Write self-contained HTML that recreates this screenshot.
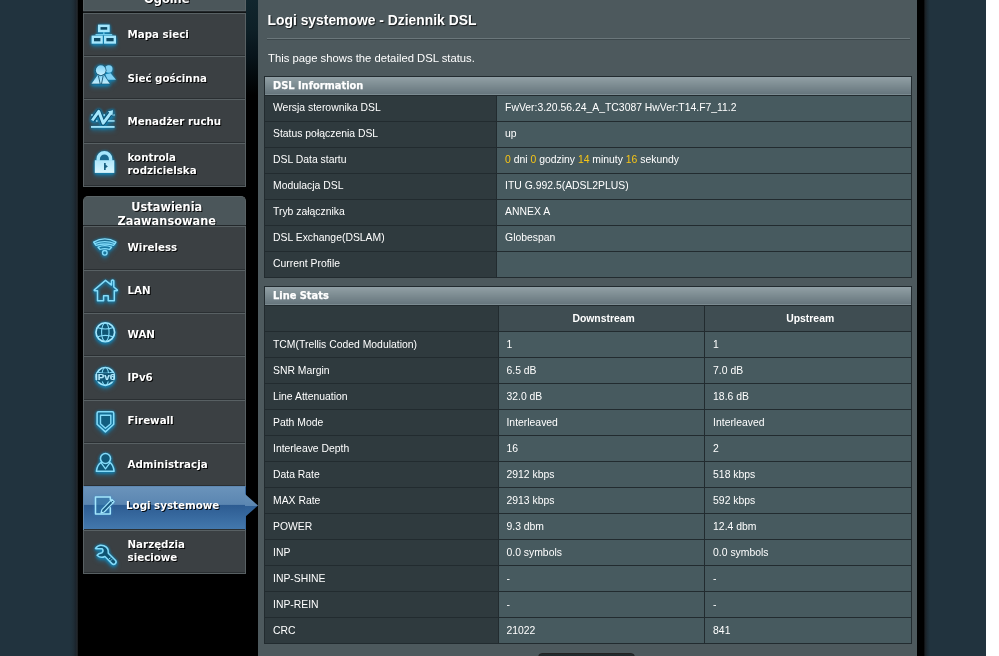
<!DOCTYPE html>
<html lang="pl"><head><meta charset="utf-8"><title>Logi systemowe - Dziennik DSL</title>
<style>
html,body{margin:0;padding:0;}
body{width:999px;height:656px;overflow:hidden;background:#fff;position:relative;font-family:"Liberation Sans",Arial,sans-serif;color:#fff;}
#bg{position:absolute;left:0;top:0;width:986px;height:656px;background:#21333e;overflow:hidden;}
#blk{position:absolute;left:77px;top:0;width:847px;height:656px;background:#000;}
#el{position:absolute;left:70px;top:0;width:7.5px;height:656px;background:linear-gradient(to right,#21333e 0%,#1f2e38 40%,#1b242c 72%,#25292d 90%,#0a0c0e 100%);}
#er{position:absolute;left:923.7px;top:0;width:6px;height:656px;background:linear-gradient(to right,#0a0c0e 0%,#1b2227 25%,#1c2a33 55%,#21333e 100%);}
#glow{position:absolute;left:246px;top:0;width:12px;height:95px;background:linear-gradient(to bottom,#11262e 0%,#0e2027 30%,#07131a 60%,#000 100%);}
.mh{position:absolute;left:83px;width:163px;background:#4b565a;border:1px solid #5a6366;border-bottom:none;border-radius:5px 5px 0 0;text-align:center;font-family:"DejaVu Sans",Verdana,sans-serif;font-weight:bold;font-size:11.4px;line-height:13.6px;padding-left:4.5px;text-shadow:1px 1px .6px rgba(0,0,0,.9);box-sizing:border-box;overflow:hidden;}
.mi{position:absolute;left:83px;width:163px;height:44.33px;box-sizing:border-box;border:1px solid #586063;background:#3b4043;box-shadow:inset 0 -1px 0 #2a2f32;font-family:"DejaVu Sans",Verdana,sans-serif;font-weight:bold;font-size:10.3px;text-shadow:1px 1px .6px rgba(0,0,0,.9);}
.mi .tx{position:absolute;left:43.5px;top:-1px;height:42.3px;display:flex;align-items:center;line-height:13px;white-space:nowrap;}
.mi svg{position:absolute;left:0;top:0;overflow:visible;}
.mi.act{background:linear-gradient(to bottom,#6a93bb 0%,#5b86b1 40.5%,#2d5c92 42.5%,#4479ae 100%);border-color:#5f88b2 #39689b #39689b #5f88b2;}
.mi.act .tx{left:42px;top:-3.2px;}
#arrow{position:absolute;left:245px;top:494px;width:13px;height:23px;}
#panel{position:absolute;left:258px;top:-10px;width:659px;height:680px;background:#4d595d;border-radius:3px;}
#title{position:absolute;left:267.5px;top:12px;font-size:13.88px;font-weight:bold;line-height:16px;white-space:nowrap;text-shadow:1px 1px 1px rgba(0,0,0,.7);}
#hr{position:absolute;left:267px;top:38.3px;width:643px;height:1px;background:#6b777b;box-shadow:0 1px 0 #3d484c;}
#desc{position:absolute;left:268px;top:50.5px;font-size:11.27px;line-height:14px;white-space:nowrap;}
table{position:absolute;left:264px;width:648px;border-collapse:collapse;font-size:10.4px;table-layout:fixed;}
td,th{border:1px solid #222b2f;padding:0 0 0 8px;height:25px;text-align:left;font-weight:normal;white-space:nowrap;overflow:hidden;}
th{background:#2f3a3e;}
td{background:#475a5f;padding-left:7.7px;}
thead td{height:18px;background:linear-gradient(to bottom,#93a1a6 0%,#66757c 100%);font-family:"DejaVu Sans",Verdana,sans-serif;font-weight:bold;font-size:9.85px;padding-left:8px;-webkit-text-stroke:.25px #fff;}
.t1 tbody td,.t1 tbody th{padding-bottom:1.6px;height:23.42px;}
th.c{text-align:center;font-weight:bold;padding-left:4px;background:#3f4d52;}
.y{color:#f7c515;}
#btn{position:absolute;left:538px;top:653px;width:97px;height:20px;border:1px solid #222;border-radius:4px;background:linear-gradient(to bottom,#222b2e,#121a1d);box-sizing:border-box;}
</style></head><body>
<svg width="0" height="0" style="position:absolute"><defs>
<filter id="gl" x="-40%" y="-40%" width="180%" height="200%" color-interpolation-filters="sRGB"><feGaussianBlur in="SourceAlpha" stdDeviation="1.5" result="b"/><feFlood flood-color="#0f84b6" flood-opacity=".9"/><feComposite in2="b" operator="in" result="g"/><feOffset in="g" dy="1.2" result="g2"/><feGaussianBlur in="SourceAlpha" stdDeviation="2.2" result="b3"/><feFlood flood-color="#1685b8" flood-opacity=".65"/><feComposite in2="b3" operator="in" result="g3a"/><feOffset in="g3a" dy="3" result="g3"/><feMerge><feMergeNode in="g3"/><feMergeNode in="g"/><feMergeNode in="g2"/><feMergeNode in="SourceGraphic"/></feMerge></filter>
<filter id="gl2" x="-40%" y="-40%" width="180%" height="180%" color-interpolation-filters="sRGB"><feGaussianBlur in="SourceAlpha" stdDeviation="1.4" result="b"/><feFlood flood-color="#2f8fd0" flood-opacity=".6"/><feComposite in2="b" operator="in" result="g"/><feMerge><feMergeNode in="g"/><feMergeNode in="SourceGraphic"/></feMerge></filter>
<linearGradient id="gA" x1="0" y1="0" x2="0" y2="1"><stop offset="0" stop-color="#7fd3f8"/><stop offset="1" stop-color="#c4eefd"/></linearGradient>
<linearGradient id="gB" x1="0" y1="0" x2="0" y2="1"><stop offset="0" stop-color="#aee6fa"/><stop offset="1" stop-color="#d9f6fe"/></linearGradient>
</defs></svg>
<div id="bg" style="will-change:transform">
<div id="blk"></div><div id="el"></div><div id="er"></div>
<div id="glow"></div>

<div class="mh" style="top:-20px;height:31.2px;padding-top:12px;border-radius:0;box-shadow:inset 0 -1px 0 #566064,0 1.5px 0 #23282b;">Ogólne</div>
<div class="mi" style="top:12.70px"><svg width="45" height="42.3" viewBox="84 13.70 45 42.3"><g filter="url(#gl)">
<rect x="99.25" y="25.55" width="9.2" height="5.1" fill="#0f4a64" stroke="#a4e6fc" stroke-width="2.5"/>
<path d="M103.85 32 V34.3 M95.5 34.3 H112.2" fill="none" stroke="#84dbf9" stroke-width="1.3" opacity=".85"/>
<rect x="92.8" y="36.5" width="8.8" height="5.7" fill="#0f4a64" stroke="#a4e6fc" stroke-width="2.4"/>
<rect x="105.2" y="36.5" width="9.6" height="5.7" fill="#0f4a64" stroke="#a4e6fc" stroke-width="2.4"/>
</g></svg><div class="tx" style="margin-top:1px"><span>Mapa sieci</span></div></div>
<div class="mi" style="top:56.03px"><svg width="45" height="42.3" viewBox="84 57.03 45 42.3"><g filter="url(#gl)">
<circle cx="108.8" cy="69" r="3.7" fill="#7fd0f3"/>
<path d="M105.3 74.2 L110.6 73.4 L116 79.8 L107.6 79.8 Z" fill="#7fd0f3"/>
<circle cx="100.8" cy="70.3" r="5.6" fill="#134e6b"/>
<circle cx="100.8" cy="70.3" r="4.9" fill="url(#gA)"/>
<path d="M91 84 L97.6 74.6 Q100.8 77 104 74.6 L110.3 84 Z" fill="url(#gA)" stroke="#134e6b" stroke-width=".6"/>
<path d="M98.4 75.6 L100.2 84 M103.2 75.6 L101.5 84" fill="none" stroke="#14506e" stroke-width=".9"/>
</g></svg><div class="tx" style="margin-top:1px"><span>Sieć gościnna</span></div></div>
<div class="mi" style="top:99.37px"><svg width="45" height="42.3" viewBox="84 100.37 45 42.3"><g filter="url(#gl)" transform="translate(0,.3)">
<path d="M91.2 115 h1.6 M103.4 115 h1.6 M113 115 h1.6 M96 121 h1.6" fill="none" stroke="#a4e6fc" stroke-width="1.5"/>
<path d="M107.5 121 H114.6" fill="none" stroke="#a4e6fc" stroke-width="1.5"/>
<path d="M91 127 H114.6" fill="none" stroke="#a4e6fc" stroke-width="1.8"/>
<path d="M92.2 120.6 L98.7 111.4 L103.2 123.2 L111 112.6" fill="none" stroke="#0e4d6c" stroke-width="4.9" stroke-linejoin="round"/>
<path d="M107.2 111.2 L113.6 109.6 L112.8 116.6 Z" fill="#a4e6fc" stroke="#0e4d6c" stroke-width=".8"/>
<path d="M92.2 120.6 L98.7 111.4 L103.2 123.2 L111 112.6" fill="none" stroke="#a4e6fc" stroke-width="2.9" stroke-linejoin="round"/>
</g></svg><div class="tx" style="margin-top:1px"><span>Menadżer ruchu</span></div></div>
<div class="mi" style="top:142.70px"><svg width="45" height="42.3" viewBox="84 143.70 45 42.3"><g filter="url(#gl)">
<path d="M98.2 160.5 V158.6 A6.2 6.2 0 0 1 110.6 158.6 V160.5" fill="#1b6b90" stroke="#a4e6fc" stroke-width="3.4"/>
<rect x="94.8" y="159.9" width="19.5" height="12.7" fill="url(#gB)"/>
<path d="M104 162.8 h1.7 v1.6 l2.2 1.7 l-2.2 1.7 v1.8 h-1.7 Z" fill="#1c6282"/>
</g></svg><div class="tx"><span>kontrola<br>rodzicielska</span></div></div>
<div class="mh" style="top:195.7px;height:29.6px;padding-top:4.6px;box-shadow:0 1.5px 0 #23282b;">Ustawienia<br>Zaawansowane</div>
<div class="mi" style="top:226.40px"><svg width="45" height="42.3" viewBox="84 227.40 45 42.3"><g filter="url(#gl)">
<path d="M93.6 242.5 Q104.8 236.1 116 242.5 L113.6 245.7 Q104.8 243.1 96 245.7 Z" fill="none" stroke="#84dbf9" stroke-width="1.3" stroke-linejoin="round" stroke-linecap="round" />
<path d="M94.8 244.1 Q104.8 239.9 114.8 244.1" fill="none" stroke="#84dbf9" stroke-width="1.3" stroke-linejoin="round" stroke-linecap="round" />
<path d="M98 247.6 Q104.8 244.6 111.6 247.6 L109.5 249.9 Q104.8 248.1 100.1 249.9 Z" fill="none" stroke="#84dbf9" stroke-width="1.3" stroke-linejoin="round" stroke-linecap="round" />
<circle cx="104.8" cy="253.2" r="2.3" fill="none" stroke="#84dbf9" stroke-width="1.35" stroke-linejoin="round" stroke-linecap="round" />
</g></svg><div class="tx"><span>Wireless</span></div></div>
<div class="mi" style="top:269.73px"><svg width="45" height="42.3" viewBox="84 270.73 45 42.3"><g filter="url(#gl)">
<path d="M105.5 280.1 L94.3 289.6 Q93.8 290.4 94.8 290.4 L97.5 290.4 V300.5 H103.6 V295.6 H108.2 V300.5 H114.3 V290.4 L116.8 290.4 Q117.8 290.4 117.2 289.6 L113.8 286.7 V280.4 Q112.6 279 111.5 280.4 V284.8 Z" fill="none" stroke="#84dbf9" stroke-width="1.5" stroke-linejoin="round" stroke-linecap="round" />
</g></svg><div class="tx"><span>LAN</span></div></div>
<div class="mi" style="top:313.07px"><svg width="45" height="42.3" viewBox="84 314.07 45 42.3"><g filter="url(#gl)"><circle cx="105.3" cy="332.3" r="9.3" fill="#0f4a64" fill-opacity=".8" stroke="#a4e6fc" stroke-width="1.7"/>
<ellipse cx="105.3" cy="332.3" rx="3.72" ry="9.3" fill="none" stroke="#84dbf9" stroke-width="1.1" stroke-linejoin="round" stroke-linecap="round" />
<path d="M97.30 327.65 Q105.3 330.63 113.30 327.65 M97.30 336.95 Q105.3 333.97 113.30 336.95" fill="none" stroke="#84dbf9" stroke-width="1.1" stroke-linejoin="round" stroke-linecap="round" /></g></svg><div class="tx"><span>WAN</span></div></div>
<div class="mi" style="top:356.40px"><svg width="45" height="42.3" viewBox="84 357.40 45 42.3"><g filter="url(#gl)"><circle cx="105.3" cy="376.8" r="8.9" fill="#0f4a64" fill-opacity=".8" stroke="#a4e6fc" stroke-width="1.7"/>
<ellipse cx="105.3" cy="376.8" rx="3.56" ry="8.9" fill="none" stroke="#84dbf9" stroke-width="1.1" stroke-linejoin="round" stroke-linecap="round" />
<path d="M97.65 372.35 Q105.3 375.20 112.95 372.35 M97.65 381.25 Q105.3 378.40 112.95 381.25" fill="none" stroke="#84dbf9" stroke-width="1.1" stroke-linejoin="round" stroke-linecap="round" />
<rect x="96.9" y="373.5" width="16.8" height="8.3" fill="#125877"/>
<text x="105.2" y="380.9" text-anchor="middle" font-family="Liberation Sans, Arial, sans-serif" font-size="8.3" textLength="20.4" lengthAdjust="spacingAndGlyphs" fill="#b5eafc" stroke="#b5eafc" stroke-width=".12" style="text-shadow:none">IPv6</text></g></svg><div class="tx"><span>IPv6</span></div></div>
<div class="mi" style="top:399.73px"><svg width="45" height="42.3" viewBox="84 400.73 45 42.3"><g filter="url(#gl)">
<path d="M98.6 411.4 H112.2 Q113.7 411.4 113.7 412.9 V424 L105.4 431.6 L97.1 424 V412.9 Q97.1 411.4 98.6 411.4 Z" fill="none" stroke="#84dbf9" stroke-width="1.55" stroke-linejoin="round" stroke-linecap="round"  style="fill:#0f5678" fill-opacity=".25"/>
<path d="M100.5 415 H110.8 V423.4 L105.4 428 L100.5 423.4 Z" fill="none" stroke="#84dbf9" stroke-width="1.4" stroke-linejoin="round" stroke-linecap="round"  style="fill:#0f4a64" fill-opacity=".5"/>
</g></svg><div class="tx"><span>Firewall</span></div></div>
<div class="mi" style="top:443.06px"><svg width="45" height="42.3" viewBox="84 444.06 45 42.3"><g filter="url(#gl)">
<path d="M101.3 462.4 Q97.2 464.6 96.4 471.3 H114.1 Q113.3 464.6 109.6 462.4" fill="none" stroke="#84dbf9" stroke-width="1.55" stroke-linejoin="round" stroke-linecap="round"  style="fill:#0f4a64" fill-opacity=".7"/>
<path d="M101.3 463.2 L105.5 469 L109.7 463.2" fill="none" stroke="#84dbf9" stroke-width="1.3" stroke-linejoin="round" stroke-linecap="round" />
<circle cx="105.5" cy="458.6" r="5" fill="none" stroke="#84dbf9" stroke-width="1.55" stroke-linejoin="round" stroke-linecap="round"  style="fill:#0f4a64" fill-opacity=".7"/>
</g></svg><div class="tx"><span>Administracja</span></div></div>
<div class="mi act" style="top:486.40px"><svg width="45" height="42.3" viewBox="84 487.40 45 42.3"><g filter="url(#gl2)" transform="translate(0,.5)">
<path d="M110.3 499.4 V497 H95.5 V514 H110.3 V507.8" fill="none" stroke="#a4e6fc" stroke-width="1.55" stroke-linejoin="round" stroke-linecap="round"  style="fill:#2a6a9a" fill-opacity=".45"/>
<path d="M101 512.8 L101.9 509.6 L111.9 499.3 L114.2 501.6 L104.2 511.9 Z" fill="none" stroke="#a4e6fc" stroke-width="1.2" stroke-linejoin="round" stroke-linecap="round"  style="fill:#16577c" fill-opacity=".9"/>
<path d="M110.6 500.7 L112.9 503" fill="none" stroke="#a4e6fc" stroke-width="1.0" stroke-linejoin="round" stroke-linecap="round" />
</g></svg><div class="tx"><span>Logi systemowe</span></div></div>
<div class="mi" style="top:529.73px"><svg width="45" height="42.3" viewBox="84 530.73 45 42.3"><g filter="url(#gl)">
<path d="M95.51 548.15 A7.0 7.0 0 0 1 108.25 552.92 L115.32 559.99 A2.35 2.35 0 0 1 111.99 563.32 L104.92 556.25 A7.0 7.0 0 0 1 97.08 554.97 L99.0 553.4 L102.0 552.5 Q104 550.5 102.2 548.5 L96.2 548.4 Z" fill="none" stroke="#84dbf9" stroke-width="1.55" stroke-linejoin="round" stroke-linecap="round"  style="fill:#0f4a64" fill-opacity=".8"/>
<path d="M109.3 558.6 l.9 -.9 M110.9 560.2 l.9 -.9" fill="none" stroke="#84dbf9" stroke-width="1.0" stroke-linejoin="round" stroke-linecap="round" />
</g></svg><div class="tx"><span>Narzędzia<br>sieciowe</span></div></div>
<svg id="arrow" viewBox="0 0 13 23"><defs><linearGradient id="ag" x1="0" y1="0" x2="0" y2="1"><stop offset="0" stop-color="#6690b8"/><stop offset=".5" stop-color="#5b86b1"/><stop offset=".52" stop-color="#2f5f95"/><stop offset="1" stop-color="#376aa0"/></linearGradient></defs><path d="M0 0 L13 11.5 L0 23 Z" fill="url(#ag)"/></svg>
<div id="panel"></div>
<div id="title">Logi systemowe - Dziennik DSL</div><div id="hr"></div>
<div id="desc">This page shows the detailed DSL status.</div>
<table class="t1" style="top:75.6px"><colgroup><col style="width:232.4px"><col></colgroup><thead><tr><td colspan="2">DSL Information</td></tr></thead><tbody>
<tr><th>Wersja sterownika DSL</th><td>FwVer:3.20.56.24_A_TC3087 HwVer:T14.F7_11.2</td></tr>
<tr><th>Status połączenia DSL</th><td>up</td></tr>
<tr><th>DSL Data startu</th><td><span class="y">0</span> dni <span class="y">0</span> godziny <span class="y">14</span> minuty <span class="y">16</span> sekundy</td></tr>
<tr><th>Modulacja DSL</th><td>ITU G.992.5(ADSL2PLUS)</td></tr>
<tr><th>Tryb załącznika</th><td>ANNEX A</td></tr>
<tr><th>DSL Exchange(DSLAM)</th><td>Globespan</td></tr>
<tr><th>Current Profile</th><td></td></tr>
</tbody></table>
<table style="top:285.6px"><colgroup><col style="width:233.8px"><col style="width:206.6px"><col></colgroup><thead><tr><td colspan="3" style="height:18px">Line Stats</td></tr></thead><tbody>
<tr><th></th><th class="c">Downstream</th><th class="c">Upstream</th></tr>
<tr><th>TCM(Trellis Coded Modulation)</th><td>1</td><td>1</td></tr>
<tr><th>SNR Margin</th><td>6.5 dB</td><td>7.0 dB</td></tr>
<tr><th>Line Attenuation</th><td>32.0 dB</td><td>18.6 dB</td></tr>
<tr><th>Path Mode</th><td>Interleaved</td><td>Interleaved</td></tr>
<tr><th>Interleave Depth</th><td>16</td><td>2</td></tr>
<tr><th>Data Rate</th><td>2912 kbps</td><td>518 kbps</td></tr>
<tr><th>MAX Rate</th><td>2913 kbps</td><td>592 kbps</td></tr>
<tr><th>POWER</th><td>9.3 dbm</td><td>12.4 dbm</td></tr>
<tr><th>INP</th><td>0.0 symbols</td><td>0.0 symbols</td></tr>
<tr><th>INP-SHINE</th><td>-</td><td>-</td></tr>
<tr><th>INP-REIN</th><td>-</td><td>-</td></tr>
<tr><th>CRC</th><td>21022</td><td>841</td></tr>
</tbody></table>
<div id="btn"></div>
</div></body></html>
